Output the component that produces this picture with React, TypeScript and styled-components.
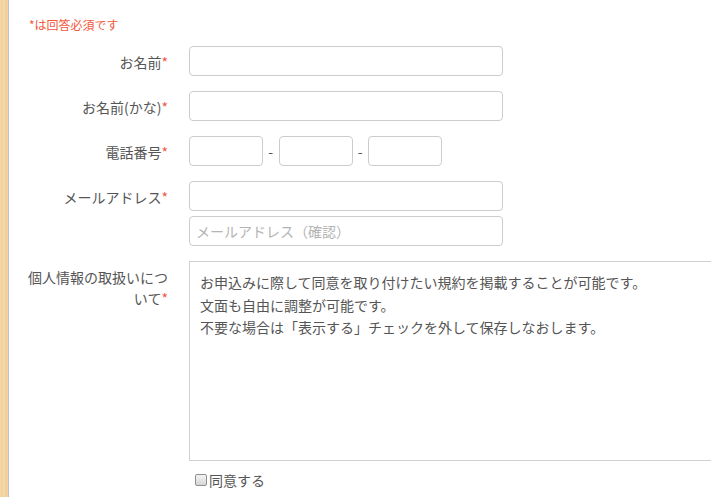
import React from "react";
import styled, { createGlobalStyle } from "styled-components";

const GlobalStyle = createGlobalStyle`
  html, body {
    margin: 0;
    padding: 0;
    background: #ffffff;
    overflow: hidden;
  }
  body {
    font-family: "Noto Sans CJK JP", "Noto Sans", "Liberation Sans", sans-serif;
    color: #555555;
  }
`;

const Page = styled.div`
  display: flex;
  min-height: 100vh;
  width: 100vw;
  overflow: hidden;
`;

const WoodStrip = styled.aside`
  flex: 0 0 8px;
  background: repeating-linear-gradient(
      90deg,
      #f6d9aa 0px,
      #f1cf98 2px,
      #f7dcb0 4px,
      #f0cc94 6px,
      #f5d6a4 8px
    );
  border-right: 1px solid #b9c4d0;
`;

const Main = styled.main`
  flex: 1;
  padding: 16px 0 0 16px;
  min-width: 0;
`;

const Note = styled.p`
  margin: 0 0 12px;
  padding-left: 4px;
  font-size: 12px;
  line-height: 18px;
  color: #f2583e;
`;

const Row = styled.div<{ $gap?: number }>`
  display: flex;
  align-items: flex-start;
  gap: 21px;
  margin-bottom: ${(p) => (p.$gap ?? 15)}px;
`;

const Label = styled.label`
  flex: 0 0 143px;
  text-align: right;
  font-size: 14px;
  line-height: 21px;
  padding-top: 6px;
  color: #555555;
  word-break: break-all;
`;

const Req = styled.span`
  color: #ef5a4a;
`;

const Field = styled.div`
  display: flex;
  flex-direction: column;
  gap: 5px;
  min-width: 0;
`;

const Inline = styled.div`
  display: flex;
  align-items: center;
`;

const TextInput = styled.input<{ $w?: number }>`
  box-sizing: border-box;
  width: ${(p) => p.$w ?? 314}px;
  height: 30px;
  margin: 0;
  padding: 4px 6px;
  border: 1px solid #cccccc;
  border-radius: 4px;
  background: #ffffff;
  font-family: inherit;
  font-size: 14px;
  color: #555555;
  outline: none;
  &::placeholder {
    color: #b4b4b4;
  }
`;

const Dash = styled.span`
  width: 15.5px;
  text-align: center;
  font-size: 14px;
  color: #555555;
`;

const Terms = styled.textarea`
  box-sizing: border-box;
  width: 560px;
  height: 200px;
  margin: 0;
  padding: 9px 10px;
  border: 1px solid #d0d0d0;
  border-radius: 0;
  resize: none;
  font-family: inherit;
  font-size: 14px;
  line-height: 22.5px;
  color: #555555;
  background: #ffffff;
  outline: none;
  overflow: hidden;
`;

const AgreeRow = styled.label`
  display: flex;
  align-items: center;
  gap: 2px;
  margin-top: 4px;
  padding-left: 6px;
  font-size: 14px;
  line-height: 20px;
  color: #555555;
`;

const CheckBox = styled.input`
  appearance: none;
  box-sizing: border-box;
  width: 12px;
  height: 12px;
  margin: 0;
  border: 1px solid #8f8f8f;
  border-radius: 2px;
  background: linear-gradient(#f4f4f4, #d6d6d6);
`;

const termsText =
  "お申込みに際して同意を取り付けたい規約を掲載することが可能です。\n文面も自由に調整が可能です。\n不要な場合は「表示する」チェックを外して保存しなおします。";

export default function App() {
  return (
    <>
      <GlobalStyle />
      <Page>
        <WoodStrip />
        <Main>
          <Note>*は回答必須です</Note>

          <Row>
            <Label>
              お名前<Req>*</Req>
            </Label>
            <Field>
              <TextInput type="text" />
            </Field>
          </Row>

          <Row>
            <Label>
              お名前(かな)<Req>*</Req>
            </Label>
            <Field>
              <TextInput type="text" />
            </Field>
          </Row>

          <Row>
            <Label>
              電話番号<Req>*</Req>
            </Label>
            <Field>
              <Inline>
                <TextInput type="text" $w={74} />
                <Dash>-</Dash>
                <TextInput type="text" $w={74} />
                <Dash>-</Dash>
                <TextInput type="text" $w={74} />
              </Inline>
            </Field>
          </Row>

          <Row>
            <Label>
              メールアドレス<Req>*</Req>
            </Label>
            <Field>
              <TextInput type="text" />
              <TextInput type="text" placeholder="メールアドレス（確認）" />
            </Field>
          </Row>

          <Row>
            <Label>
              個人情報の取扱いについて<Req>*</Req>
            </Label>
            <Field>
              <Terms readOnly defaultValue={termsText} />
              <AgreeRow>
                <CheckBox type="checkbox" />
                同意する
              </AgreeRow>
            </Field>
          </Row>
        </Main>
      </Page>
    </>
  );
}
